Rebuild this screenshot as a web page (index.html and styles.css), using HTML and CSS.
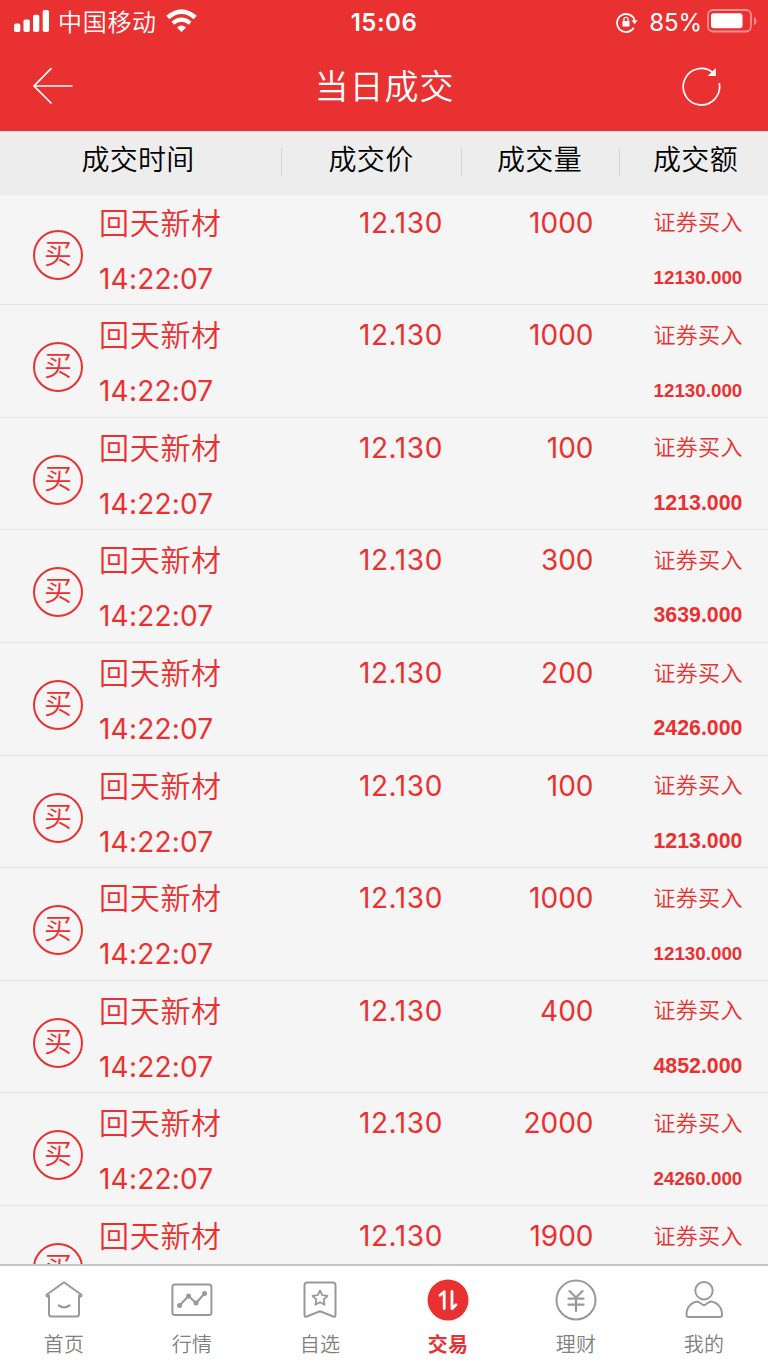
FILE: index.html
```html
<!DOCTYPE html>
<html lang="zh-CN">
<head>
<meta charset="utf-8">
<title>当日成交</title>
<link rel="stylesheet" href="styles.css">
</head>
<body>
<div class="app">
  <header class="top">
    <div class="status">
      <div class="status-left">
        <svg class="signal" width="36" height="23" viewBox="0 0 36 23" fill="#fff"><rect x="0" y="13.5" width="6.3" height="8.5" rx="1.8"/><rect x="9.5" y="9.5" width="6.3" height="12.5" rx="1.8"/><rect x="19" y="4.7" width="6.3" height="17.3" rx="1.8"/><rect x="28.7" y="0" width="6.3" height="22" rx="1.8"/></svg>
        <span class="carrier">中国移动</span>
        <svg class="wifi" width="32" height="24" viewBox="0 0 32 24" fill="none" stroke="#fff"><path d="M1.800 8.600Q15.500-3.200 29.200 8.600" stroke-width="4.600"/><path d="M6.800 14.200Q15.500 7 24.200 14.200" stroke-width="4"/><path d="M11 18.500Q15.500 14.700 20 18.500L15.500 23Z" fill="#fff" stroke="none"/></svg>
      </div>
      <div class="clock">15:06</div>
      <div class="status-right">
        <svg class="lock" width="22" height="22" viewBox="0 0 22 22" fill="none" stroke="#fff"><path d="M17.700 15.800A9 9 0 1 1 18.700 8.500" stroke-width="1.800"/><path d="M15.500 8.300h6l-2.800 4z" fill="#fff" stroke="none"/><rect x="6.500" y="9" width="7" height="5.500" rx=".6" fill="#fff" stroke="none"/><path d="M7.900 9.500V7.400a2.100 2.100 0 0 1 4.200 0V9.500" stroke-width="1.300"/></svg>
        <span class="percent">85%</span>
        <svg class="battery" width="50" height="24" viewBox="0 0 50 24"><rect x="1" y="1" width="43" height="21.500" rx="5" fill="none" stroke="#f39191" stroke-width="1.800"/><rect x="4" y="4.200" width="31.500" height="15" rx="2.600" fill="#fff"/><path d="M47 8q2.500 1 2.500 4t-2.500 4z" fill="#f39191"/></svg>
      </div>
    </div>
    <div class="navbar">
      <svg class="back" width="42" height="38" viewBox="0 0 42 38" fill="none" stroke="#fff" stroke-width="1.700"><path d="M19.500 1.200L2 19L19.500 36.500M2 19H40.500"/></svg>
      <h1 class="title">当日成交</h1>
      <svg class="refresh" width="40" height="40" viewBox="0 0 40 40" fill="none" stroke="#fff" stroke-width="1.700"><path d="M38.200 17A18.200 18.200 0 1 1 32 6.700"/><path d="M34.800 2v8h-8z" fill="#fff" stroke="none"/></svg>
    </div>
  </header>

  <div class="columns">
    <span class="col-time">成交时间</span>
    <span class="col-price">成交价</span>
    <span class="col-volume">成交量</span>
    <span class="col-amount">成交额</span>
  </div>

  <main class="trades">
    <div class="trade"><span class="badge">买</span><span class="name">回天新材</span><span class="price">12.130</span><span class="volume">1000</span><span class="kind">证券买入</span><span class="time">14:22:07</span><span class="amount long">12130.000</span></div>
    <div class="trade"><span class="badge">买</span><span class="name">回天新材</span><span class="price">12.130</span><span class="volume">1000</span><span class="kind">证券买入</span><span class="time">14:22:07</span><span class="amount long">12130.000</span></div>
    <div class="trade"><span class="badge">买</span><span class="name">回天新材</span><span class="price">12.130</span><span class="volume">100</span><span class="kind">证券买入</span><span class="time">14:22:07</span><span class="amount">1213.000</span></div>
    <div class="trade"><span class="badge">买</span><span class="name">回天新材</span><span class="price">12.130</span><span class="volume">300</span><span class="kind">证券买入</span><span class="time">14:22:07</span><span class="amount">3639.000</span></div>
    <div class="trade"><span class="badge">买</span><span class="name">回天新材</span><span class="price">12.130</span><span class="volume">200</span><span class="kind">证券买入</span><span class="time">14:22:07</span><span class="amount">2426.000</span></div>
    <div class="trade"><span class="badge">买</span><span class="name">回天新材</span><span class="price">12.130</span><span class="volume">100</span><span class="kind">证券买入</span><span class="time">14:22:07</span><span class="amount">1213.000</span></div>
    <div class="trade"><span class="badge">买</span><span class="name">回天新材</span><span class="price">12.130</span><span class="volume">1000</span><span class="kind">证券买入</span><span class="time">14:22:07</span><span class="amount long">12130.000</span></div>
    <div class="trade"><span class="badge">买</span><span class="name">回天新材</span><span class="price">12.130</span><span class="volume">400</span><span class="kind">证券买入</span><span class="time">14:22:07</span><span class="amount">4852.000</span></div>
    <div class="trade"><span class="badge">买</span><span class="name">回天新材</span><span class="price">12.130</span><span class="volume">2000</span><span class="kind">证券买入</span><span class="time">14:22:07</span><span class="amount long">24260.000</span></div>
    <div class="trade"><span class="badge">买</span><span class="name">回天新材</span><span class="price">12.130</span><span class="volume">1900</span><span class="kind">证券买入</span></div>
  </main>

  <nav class="tabs">
    <a class="tab"><svg class="tab-icon" viewBox="0 0 42 42"><path d="M6 16.500V35q0 2.500 2.500 2.500h25q2.500 0 2.500-2.500V16.500M6 17.500H4q-1-1.500.3-2.300L21 3.300l16.700 11.900q1.300.8.300 2.300h-2"/><path d="M16 26.500q5 3.800 10.500 0" stroke-width="2.300"/></svg><span>首页</span></a>
    <a class="tab"><svg class="tab-icon" viewBox="0 0 42 42"><rect x="1.400" y="5.500" width="39" height="30.500" rx="2.500"/><path d="M8.500 26.500L17.500 17L25 24L33.500 14.500"/><g class="dots"><circle cx="8.500" cy="26.500" r="2.500"/><circle cx="17.500" cy="17" r="2.500"/><circle cx="25" cy="24" r="2.500"/><circle cx="33.500" cy="14.500" r="2.500"/></g></svg><span>行情</span></a>
    <a class="tab"><svg class="tab-icon" viewBox="0 0 42 42"><path d="M8 3.500h26q2.500 0 2.500 2.500v30q0 2.500-2.300 1.500L21 32.300L7.800 37.500q-2.300 1-2.300-1.500V6q0-2.500 2.500-2.500z"/><path d="M21 11.500l2.300 4.700 5.200.7-3.800 3.700.9 5.200-4.600-2.500-4.600 2.500.9-5.200-3.800-3.700 5.200-.7z" stroke-width="1.800"/></svg><span>自选</span></a>
    <a class="tab active"><svg class="tab-icon" viewBox="0 0 42 42"><circle class="disc" cx="21" cy="21" r="20.500"/><path class="arrows" d="M13 16.300L17.200 12.700V29.700M25 12.500V29.700L29 25.800"/></svg><span>交易</span></a>
    <a class="tab"><svg class="tab-icon" viewBox="0 0 42 42"><circle cx="21" cy="21" r="19.500"/><path d="M14.500 12L21 18.500L27.500 12M21 18.500V32M13.500 19.700h15M13.500 25.700h15" stroke-width="2.200"/></svg><span>理财</span></a>
    <a class="tab"><svg class="tab-icon" viewBox="0 0 42 42"><circle cx="21" cy="11.700" r="8.700"/><path d="M14.800 22.500L21 26.500L27.200 22.500C34 23 39 28 39 35.500q0 2.500-2 2.500H5.500q-2 0-2-2.500C3.500 28 8.500 23 14.800 22.500z"/></svg><span>我的</span></a>
  </nav>
</div>
</body>
</html>
```
FILE: styles.css
```css
* { box-sizing: border-box; }
body {
  margin: 0;
  font-family: Inter, "Noto Sans CJK SC", sans-serif;
  font-weight: 350;
  background: #fff;
}
.app {
  width: 768px;
  height: 1367px;
  display: flex;
  flex-direction: column;
  overflow: hidden;
}
.top { height: 131px; flex: none; background: #e93131; color: #fff; }
.status {
  height: 42px;
  display: grid;
  grid-template-columns: 1fr auto 1fr;
  align-items: center;
  padding: 0 11px 0 14px;
  line-height: 42px;
}
.status-left, .status-right { display: flex; align-items: center; }
.status-left { margin-top: -1px; }
.status-right { justify-content: flex-end; margin-top: -2px; }
.carrier { font-size: 24px; letter-spacing: .7px; margin-left: 8px; padding-top: 3px; }
.wifi { margin-left: 9px; margin-top: -2px; }
.clock { font-size: 24px; font-weight: 600; letter-spacing: .5px; margin-left: -3px; padding-top: 1px; }
.lock { margin-top: 3px; }
.percent { font-size: 24px; font-weight: 400; margin: 3px 5px 0 11px; letter-spacing: -.1px; }
.navbar {
  height: 89px;
  display: grid;
  grid-template-columns: 42px 1fr 40px;
  align-items: center;
  padding: 0 47px 0 32px;
}
.back, .refresh { margin-top: -1px; }
.title {
  margin: -5px 0 0 14px;
  font-size: 34px;
  font-weight: 350;
  letter-spacing: 1px;
  text-align: center;
}
.columns {
  height: 64px;
  flex: none;
  display: grid;
  grid-template-columns: 281px 180px 158px 149px;
  background: #ededed;
  border-top: 1px solid #dcdcdc;
  color: #000;
  font-size: 28px;
  letter-spacing: .3px;
  line-height: 56px;
}
.columns span {
  text-align: center;
  background: linear-gradient(#d4d4d4, #d4d4d4) left 16px / 1px 28px no-repeat;
}
.columns .col-time { background: none; padding-right: 5px; }
.columns .col-volume { padding-right: 1px; }
.columns .col-amount { padding-left: 4px; }
.trades {
  flex: 1;
  min-height: 0;
  overflow: hidden;
  background: #f5f5f5;
  color: #e93131;
}
.trade {
  height: 112.6px;
  display: grid;
  grid-template-columns: 99px 192px 152px 150.5px 60px 1fr;
  grid-template-rows: 56px 56px;
  align-content: end;
  align-items: center;
  border-bottom: 1px solid #e3e3e3;
  font-size: 28px;
  font-weight: 400;
}
.trade:first-child { height: 110.2px; }
.badge {
  grid-area: 1 / 1 / 3 / 2;
  width: 50px;
  height: 50px;
  margin: 13px 0 0 33px;
  border: 2px solid #e93131;
  border-radius: 50%;
  font-size: 28px;
  font-weight: 350;
  line-height: 45px;
  text-align: center;
}
.name { grid-area: 1 / 2; font-size: 30px; font-weight: 350; letter-spacing: .7px; padding-top: 1px; }
.price, .volume, .time { padding-top: 5px; }
.price { grid-area: 1 / 3; text-align: right; letter-spacing: .6px; }
.volume { grid-area: 1 / 4; text-align: right; }
.kind { grid-area: 1 / 6; font-size: 22px; font-weight: 350; letter-spacing: .3px; }
.time { grid-area: 2 / 2; letter-spacing: .2px; }
.amount {
  grid-area: 2 / 6;
  padding-top: 4px;
  font: bold 21.3px "Liberation Sans", sans-serif;
}
.amount.long { font-size: 18.8px; }
.tabs {
  height: 103px;
  flex: none;
  display: grid;
  grid-template-columns: repeat(6, 1fr);
  border-top: 2px solid #c5c5c5;
  background: #fff;
}
.tab {
  display: flex;
  flex-direction: column;
  align-items: center;
  padding-top: 13px;
  color: #808080;
  font-size: 20px;
  line-height: 30px;
}
.tab span { margin-top: 9px; letter-spacing: .3px; }
.tab-icon {
  width: 42px;
  height: 42px;
  fill: none;
  stroke: #999;
  stroke-width: 2;
  stroke-linejoin: round;
  stroke-linecap: round;
}
.dots { fill: #999; stroke: none; }
.active { color: #e93131; font-weight: 700; }
.disc { fill: #e93131; stroke: none; }
.tab-icon .arrows { stroke: #fff; stroke-width: 2.8; }
```
